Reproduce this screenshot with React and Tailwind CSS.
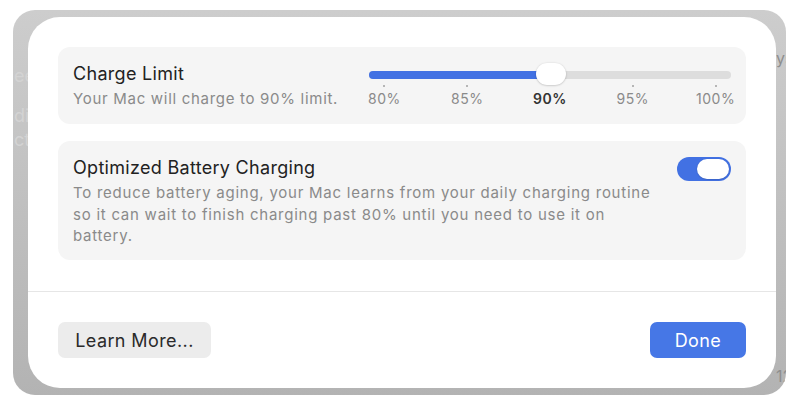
const ticks = [
  { label: "80%", active: false },
  { label: "85%", active: false },
  { label: "90%", active: true },
  { label: "95%", active: false },
  { label: "100%", active: false },
];

export default function App() {
  return (
    <div
      className="h-[408px] w-[800px] bg-white pl-[13px] pt-[10px]"
      style={{ fontFamily: "Inter, 'Liberation Sans', sans-serif" }}
    >
      <div className="flex h-[385px] w-[773px] overflow-hidden rounded-[22px] bg-gradient-to-b from-[#cdcdcd] to-[#b3b3b3] py-[7px]">
        {/* window behind the sheet */}
        <div className="flex w-[15px] flex-col overflow-hidden pt-[48px] text-[18px] leading-[22px] text-[#d3d3d3]">
          <span className="pl-[1px]">ee</span>
          <span className="mt-[18px] pl-[1px]">di</span>
          <span className="mt-[2px] pl-[1px]">ct</span>
        </div>

        <div className="flex w-[748px] flex-col rounded-[32px] bg-white">
          <div className="flex flex-col gap-[17px] px-[30px] pt-[30px]">
            {/* Charge Limit */}
            <div className="flex h-[77px] items-center justify-between rounded-[12px] bg-[#f5f5f5] pl-[15px] pr-[15px]">
              <div className="flex flex-col">
                <span className="text-[18px] leading-[22px] tracking-[0.3px] text-[#222222]">
                  Charge Limit
                </span>
                <span className="mt-[4px] text-[15px] leading-[20px] tracking-[0.7px] text-[#8a8a8a]">
                  Your Mac will charge to 90% limit.
                </span>
              </div>

              <div className="flex w-[362px] flex-col">
                <div className="relative h-[22px]">
                  <div className="absolute left-0 right-0 top-[8px] h-[8px] rounded-full bg-[#dddddd]" />
                  <div className="absolute left-0 top-[8px] h-[8px] w-[182px] rounded-full bg-[#4271e3]" />
                  <div className="absolute left-[167px] top-0 h-[22px] w-[30px] rounded-full bg-white shadow-[0_0.5px_2px_rgba(0,0,0,0.25)]" />
                </div>
                <div className="-mx-[26px] grid grid-cols-5">
                  {ticks.map((t) => (
                    <div key={t.label} className="flex flex-col items-center">
                      <span
                        className={
                          t.active
                            ? "h-[2px] w-[2px] rounded-full bg-transparent"
                            : "h-[2px] w-[2px] rounded-full bg-[#a0a0a0]"
                        }
                      />
                      <span
                        className={
                          t.active
                            ? "mt-[3px] text-[14px] font-semibold leading-[18px] tracking-[0.5px] text-[#333333]"
                            : "mt-[3px] text-[14px] leading-[18px] tracking-[0.5px] text-[#8a8a8a]"
                        }
                      >
                        {t.label}
                      </span>
                    </div>
                  ))}
                </div>
              </div>
            </div>

            {/* Optimized Battery Charging */}
            <div className="flex h-[119px] justify-between rounded-[12px] bg-[#f5f5f5] pl-[15px] pr-[15px] pt-[16px]">
              <div className="flex flex-col">
                <span className="text-[18px] leading-[22px] tracking-[0.3px] text-[#222222]">
                  Optimized Battery Charging
                </span>
                <p className="mt-[3px] flex flex-col text-[15px] leading-[21.5px] tracking-[0.75px] text-[#8a8a8a]">
                  <span>To reduce battery aging, your Mac learns from your daily charging routine</span>
                  <span>so it can wait to finish charging past 80% until you need to use it on</span>
                  <span>battery.</span>
                </p>
              </div>
              <div className="flex h-[24px] w-[54px] items-center justify-end rounded-full bg-[#4271e3] pr-[2px]">
                <div className="h-[20px] w-[32px] rounded-full bg-white shadow-[0_0.5px_1.5px_rgba(0,0,0,0.2)]" />
              </div>
            </div>
          </div>

          <div className="mt-[31px] h-px bg-[#e6e6e6]" />

          <div className="flex justify-between px-[30px] pt-[30px]">
            <button className="flex h-[36px] w-[153px] items-center justify-center rounded-[7px] bg-[#ececec] text-[18px] tracking-[0.4px] text-[#2a2a2a]">
              Learn More...
            </button>
            <button className="flex h-[36px] w-[96px] items-center justify-center rounded-[7px] bg-[#4677e6] text-[18px] tracking-[0.4px] text-white">
              Done
            </button>
          </div>
        </div>

        <div className="flex w-[10px] flex-col justify-between overflow-hidden pb-[3px] pt-[32px] text-[16px] leading-[18px]">
          <span className="text-[#8e8e8e]">ys</span>
          <span className="text-[#8e8e8e]">12</span>
        </div>
      </div>
    </div>
  );
}
